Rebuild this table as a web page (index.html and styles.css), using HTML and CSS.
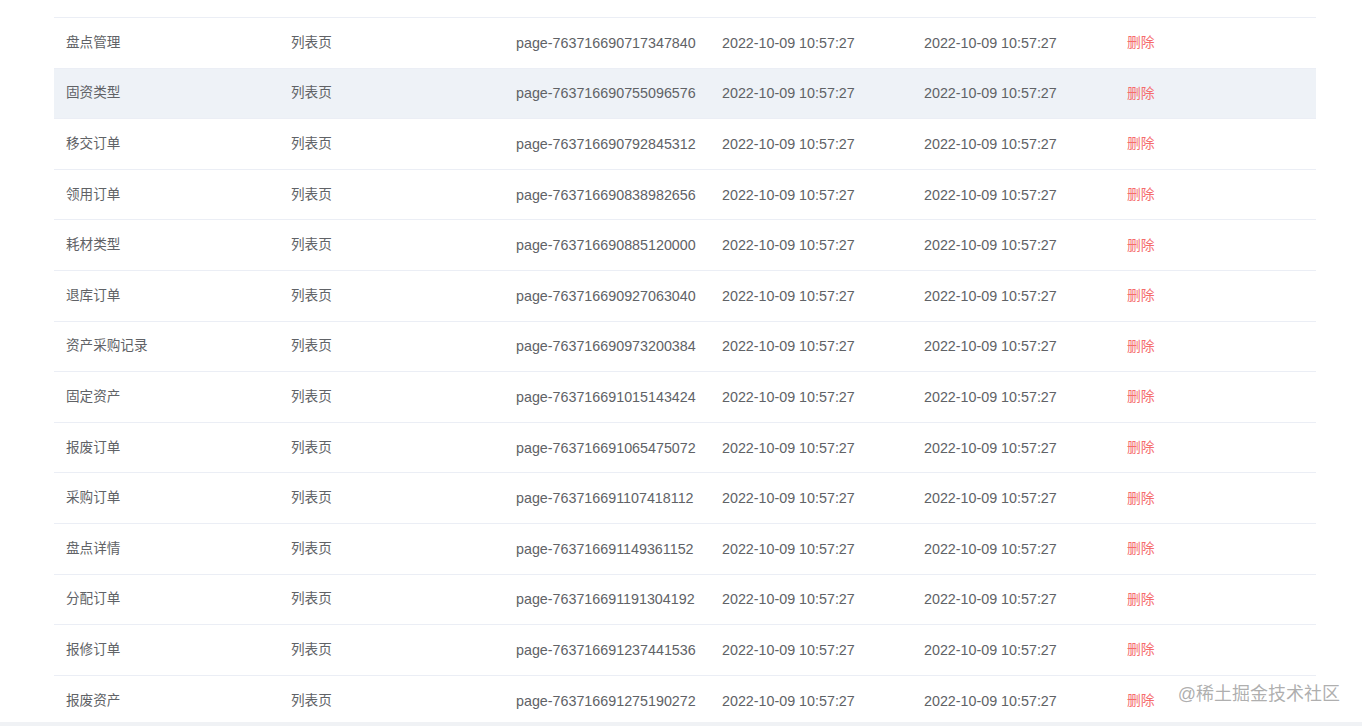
FILE: index.html
```html
<!DOCTYPE html>
<html lang="zh-CN">
<head>
<meta charset="utf-8">
<title>页面列表</title>
<link rel="stylesheet" href="styles.css">
</head>
<body>
<div class="page">
  <div class="content">
    <div class="table">
      <div class="row"><div class="cell cjk">盘点管理</div><div class="cell cjk">列表页</div><div class="cell">page-763716690717347840</div><div class="cell">2022-10-09 10:57:27</div><div class="cell">2022-10-09 10:57:27</div><div class="cell"><span class="del">删除</span></div></div>
      <div class="row hover"><div class="cell cjk">固资类型</div><div class="cell cjk">列表页</div><div class="cell">page-763716690755096576</div><div class="cell">2022-10-09 10:57:27</div><div class="cell">2022-10-09 10:57:27</div><div class="cell"><span class="del">删除</span></div></div>
      <div class="row"><div class="cell cjk">移交订单</div><div class="cell cjk">列表页</div><div class="cell">page-763716690792845312</div><div class="cell">2022-10-09 10:57:27</div><div class="cell">2022-10-09 10:57:27</div><div class="cell"><span class="del">删除</span></div></div>
      <div class="row"><div class="cell cjk">领用订单</div><div class="cell cjk">列表页</div><div class="cell">page-763716690838982656</div><div class="cell">2022-10-09 10:57:27</div><div class="cell">2022-10-09 10:57:27</div><div class="cell"><span class="del">删除</span></div></div>
      <div class="row"><div class="cell cjk">耗材类型</div><div class="cell cjk">列表页</div><div class="cell">page-763716690885120000</div><div class="cell">2022-10-09 10:57:27</div><div class="cell">2022-10-09 10:57:27</div><div class="cell"><span class="del">删除</span></div></div>
      <div class="row"><div class="cell cjk">退库订单</div><div class="cell cjk">列表页</div><div class="cell">page-763716690927063040</div><div class="cell">2022-10-09 10:57:27</div><div class="cell">2022-10-09 10:57:27</div><div class="cell"><span class="del">删除</span></div></div>
      <div class="row"><div class="cell cjk">资产采购记录</div><div class="cell cjk">列表页</div><div class="cell">page-763716690973200384</div><div class="cell">2022-10-09 10:57:27</div><div class="cell">2022-10-09 10:57:27</div><div class="cell"><span class="del">删除</span></div></div>
      <div class="row"><div class="cell cjk">固定资产</div><div class="cell cjk">列表页</div><div class="cell">page-763716691015143424</div><div class="cell">2022-10-09 10:57:27</div><div class="cell">2022-10-09 10:57:27</div><div class="cell"><span class="del">删除</span></div></div>
      <div class="row"><div class="cell cjk">报废订单</div><div class="cell cjk">列表页</div><div class="cell">page-763716691065475072</div><div class="cell">2022-10-09 10:57:27</div><div class="cell">2022-10-09 10:57:27</div><div class="cell"><span class="del">删除</span></div></div>
      <div class="row"><div class="cell cjk">采购订单</div><div class="cell cjk">列表页</div><div class="cell">page-763716691107418112</div><div class="cell">2022-10-09 10:57:27</div><div class="cell">2022-10-09 10:57:27</div><div class="cell"><span class="del">删除</span></div></div>
      <div class="row"><div class="cell cjk">盘点详情</div><div class="cell cjk">列表页</div><div class="cell">page-763716691149361152</div><div class="cell">2022-10-09 10:57:27</div><div class="cell">2022-10-09 10:57:27</div><div class="cell"><span class="del">删除</span></div></div>
      <div class="row"><div class="cell cjk">分配订单</div><div class="cell cjk">列表页</div><div class="cell">page-763716691191304192</div><div class="cell">2022-10-09 10:57:27</div><div class="cell">2022-10-09 10:57:27</div><div class="cell"><span class="del">删除</span></div></div>
      <div class="row"><div class="cell cjk">报修订单</div><div class="cell cjk">列表页</div><div class="cell">page-763716691237441536</div><div class="cell">2022-10-09 10:57:27</div><div class="cell">2022-10-09 10:57:27</div><div class="cell"><span class="del">删除</span></div></div>
      <div class="row last"><div class="cell cjk">报废资产</div><div class="cell cjk">列表页</div><div class="cell">page-763716691275190272</div><div class="cell">2022-10-09 10:57:27</div><div class="cell">2022-10-09 10:57:27</div><div class="cell"><span class="del">删除</span></div></div>
    </div>
  </div>
  <div class="strip"></div>
  <div class="watermark">@稀土掘金技术社区</div>
</div>
</body>
</html>
```

FILE: styles.css
```css
html, body {
  margin: 0;
  padding: 0;
  background: #ffffff;
}
.page {
  position: relative;
  width: 1362px;
  height: 726px;
  display: flex;
  flex-direction: column;
  overflow: hidden;
  font-family: "Liberation Sans", "Noto Sans CJK SC", sans-serif;
}
.content {
  height: 722px;
  overflow: hidden;
  padding: 17px 0 0 54px;
  box-sizing: border-box;
}
.table {
  width: 1262px;
  border-top: 1px solid #ebeef5;
}
.row {
  display: grid;
  grid-template-columns: 225px 225px 206px 202px 203px 1fr;
  height: 50.6px;
  box-sizing: border-box;
  border-bottom: 1px solid #ebeef5;
  align-items: center;
}
.row.hover {
  background: #eef2f7;
}
.cell {
  padding-left: 12px;
  font-size: 14.3px;
  color: #606266;
  white-space: nowrap;
  line-height: 20px;
}
.cell.cjk {
  font-size: 13.6px;
}
.del {
  color: #f56c6c;
  font-size: 13.8px;
}
.strip {
  flex: 1;
  background: #f0f2f5;
}
.watermark {
  position: absolute;
  right: 22px;
  top: 682px;
  font-size: 18px;
  line-height: 24px;
  color: rgba(140, 140, 140, 0.7);
}
```
